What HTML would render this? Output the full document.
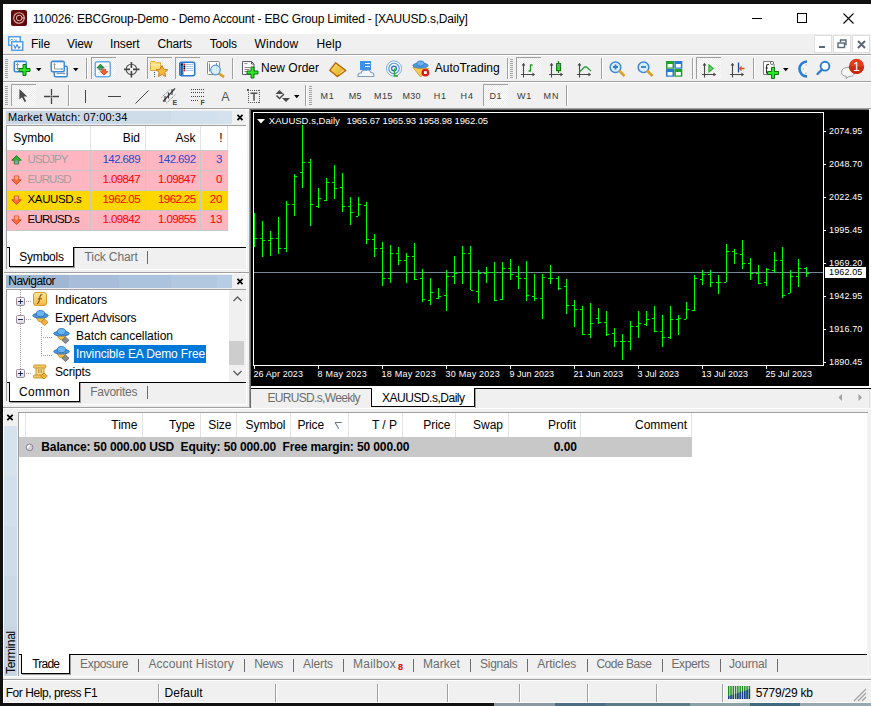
<!DOCTYPE html>
<html><head><meta charset="utf-8"><title>MT4</title>
<style>
html,body{margin:0;padding:0;}
body{width:871px;height:706px;position:relative;overflow:hidden;background:#111;font-family:"Liberation Sans",sans-serif;}
body>div{position:absolute;}
</style></head><body>
<div style="left:3px;top:4px;width:868px;height:699px;background:#f0f0f0;"></div>
<div style="left:3px;top:4px;width:868px;height:30px;background:#ffffff;"></div>
<svg style="position:absolute;left:11px;top:10px;" width="16" height="16" viewBox="0 0 16 16"><rect x="0" y="0" width="16" height="16" rx="2" fill="#620a0a"/><circle cx="8" cy="8" r="5.3" fill="none" stroke="#d8b0b0" stroke-width="1.1"/><circle cx="8.2" cy="8" r="2.8" fill="none" stroke="#e0b8b8" stroke-width="1"/><rect x="11" y="7.4" width="2.6" height="1.2" fill="#e0c0c0"/></svg>
<div style="left:32.70px;top:13.34px;font-size:12px;line-height:12px;color:#000;font-weight:400;font-family:'Liberation Sans',sans-serif;letter-spacing:-0.190px;white-space:pre;">110026: EBCGroup-Demo - Demo Account - EBC Group Limited - [XAUUSD.s,Daily]</div>
<div style="left:752px;top:18px;width:10px;height:1px;background:#000;"></div>
<div style="left:797px;top:13px;width:10px;height:10px;box-sizing:border-box;border:1px solid #000;background:transparent;"></div>
<svg style="position:absolute;left:843px;top:13px;" width="11" height="11" viewBox="0 0 11 11"><path d="M0.5 0.5 L10.5 10.5 M10.5 0.5 L0.5 10.5" stroke="#000" stroke-width="1.1"/></svg>
<div style="left:3px;top:34px;width:811px;height:20px;background:#f0f0f0;"></div>
<div style="left:3px;top:54px;width:868px;height:1px;background:#a0a0a0;"></div>
<div style="left:3px;top:55px;width:868px;height:1px;background:#ffffff;"></div>
<svg style="position:absolute;left:8px;top:36px;" width="16" height="15" viewBox="0 0 16 15"><rect x="0.75" y="0.75" width="11.5" height="8.5" fill="#fff" stroke="#4a9ae8" stroke-width="1.4"/><path d="M2.5 4.5 l1.3 -1.3 l1.3 1.3 M6.5 3.3 l1.2 1.2 l1 -0.5" stroke="#3a86d8" fill="none" stroke-width="1"/><rect x="3.75" y="5.75" width="11" height="8.5" fill="#fff" stroke="#4a9ae8" stroke-width="1.4"/><path d="M5.6 8.8 l1.6 3.5 l1.8 -3.5 l1.8 3.5 l1.5 -2" stroke="#3a86d8" fill="none" stroke-width="1.1"/></svg>
<div style="left:31.00px;top:37.84px;font-size:12px;line-height:12px;color:#000;font-weight:400;font-family:'Liberation Sans',sans-serif;letter-spacing:-0.086px;white-space:pre;">File</div>
<div style="left:67.00px;top:37.84px;font-size:12px;line-height:12px;color:#000;font-weight:400;font-family:'Liberation Sans',sans-serif;letter-spacing:-0.099px;white-space:pre;">View</div>
<div style="left:110.00px;top:37.84px;font-size:12px;line-height:12px;color:#000;font-weight:400;font-family:'Liberation Sans',sans-serif;letter-spacing:-0.103px;white-space:pre;">Insert</div>
<div style="left:157.60px;top:37.84px;font-size:12px;line-height:12px;color:#000;font-weight:400;font-family:'Liberation Sans',sans-serif;letter-spacing:-0.174px;white-space:pre;">Charts</div>
<div style="left:209.70px;top:37.84px;font-size:12px;line-height:12px;color:#000;font-weight:400;font-family:'Liberation Sans',sans-serif;letter-spacing:-0.203px;white-space:pre;">Tools</div>
<div style="left:254.50px;top:37.84px;font-size:12px;line-height:12px;color:#000;font-weight:400;font-family:'Liberation Sans',sans-serif;letter-spacing:0.219px;white-space:pre;">Window</div>
<div style="left:316.50px;top:37.84px;font-size:12px;line-height:12px;color:#000;font-weight:400;font-family:'Liberation Sans',sans-serif;letter-spacing:0.078px;white-space:pre;">Help</div>
<div style="left:814px;top:35px;width:18px;height:18px;box-sizing:border-box;border:1px solid #dedede;background:#ffffff;"></div>
<div style="left:833px;top:35px;width:18px;height:18px;box-sizing:border-box;border:1px solid #dedede;background:#ffffff;"></div>
<div style="left:852px;top:35px;width:18px;height:18px;box-sizing:border-box;border:1px solid #dedede;background:#ffffff;"></div>
<div style="left:819px;top:46px;width:6px;height:2px;background:#5a6878;"></div>
<svg style="position:absolute;left:837px;top:39px;" width="10" height="10" viewBox="0 0 10 10"><rect x="1" y="4" width="6.5" height="4.5" fill="none" stroke="#5a6878" stroke-width="1.4"/><path d="M3.5 3.5 V1 H9 V5.5 H8" fill="none" stroke="#5a6878" stroke-width="1.4"/></svg>
<svg style="position:absolute;left:857px;top:40px;" width="9" height="9" viewBox="0 0 9 9"><path d="M1 1 L8 8 M8 1 L1 8" stroke="#5a6878" stroke-width="2"/></svg>
<div style="left:3px;top:81px;width:868px;height:1px;background:#a0a0a0;"></div>
<div style="left:3px;top:82px;width:868px;height:1px;background:#ffffff;"></div>
<div style="left:5px;top:59px;width:3px;height:1px;background:#a4a4a4;"></div>
<div style="left:5px;top:61px;width:3px;height:1px;background:#a4a4a4;"></div>
<div style="left:5px;top:63px;width:3px;height:1px;background:#a4a4a4;"></div>
<div style="left:5px;top:65px;width:3px;height:1px;background:#a4a4a4;"></div>
<div style="left:5px;top:67px;width:3px;height:1px;background:#a4a4a4;"></div>
<div style="left:5px;top:69px;width:3px;height:1px;background:#a4a4a4;"></div>
<div style="left:5px;top:71px;width:3px;height:1px;background:#a4a4a4;"></div>
<div style="left:5px;top:73px;width:3px;height:1px;background:#a4a4a4;"></div>
<div style="left:5px;top:75px;width:3px;height:1px;background:#a4a4a4;"></div>
<div style="left:5px;top:77px;width:3px;height:1px;background:#a4a4a4;"></div>
<svg style="position:absolute;left:13px;top:60px;" width="20" height="18" viewBox="0 0 20 18"><rect x="1.25" y="1.25" width="12" height="10.5" rx="1.5" fill="#fff" stroke="#3a8ad8" stroke-width="1.5"/><path d="M2.5 2.6 h9.5" stroke="#b8d6f4"/><path d="M4.5 3.5 v6 M3 5 l1.5 -1.5 l1.5 1.5 M3 8 l1.5 1.5 l1.5 -1.5" stroke="#8898a8" fill="none" stroke-width="1"/><path d="M10.0 4.5 h3 v4 h4 v3 h-4 v4 h-3 v-4 h-4 v-3 h4 z" fill="#18e818" fill-opacity="0.92" stroke="#127212" stroke-width="1"/></svg>
<svg style="position:absolute;left:35.5px;top:68px;" width="6" height="4" viewBox="0 0 6 4"><path d="M0 0 h5.5 l-2.75 3.2 z" fill="#000"/></svg>
<svg style="position:absolute;left:50px;top:60px;" width="19" height="18" viewBox="0 0 19 18"><rect x="4.25" y="6.25" width="13" height="10.5" rx="1.5" fill="#fff" stroke="#3a8ad8" stroke-width="1.5"/><path d="M7 13.5 h8 M8 12.5 l-1 1 l1 1 M14 12.5 l1 1 l-1 1" stroke="#8898a8" fill="none"/><rect x="1.25" y="1.25" width="13" height="10.5" rx="1.5" fill="#fff" stroke="#3a8ad8" stroke-width="1.5"/><path d="M2.5 2.6 h10.5" stroke="#b8d6f4"/><path d="M4.5 3.5 v5.5 h8 M3.5 4.5 l1 -1 l1 1 M11.5 8 l1 1 l-1 1" stroke="#8898a8" fill="none"/></svg>
<svg style="position:absolute;left:73px;top:68px;" width="6" height="4" viewBox="0 0 6 4"><path d="M0 0 h5.5 l-2.75 3.2 z" fill="#000"/></svg>
<div style="left:86px;top:58px;width:1px;height:21px;background:#a0a0a0;"></div>
<div style="left:87px;top:58px;width:1px;height:21px;background:#ffffff;"></div>
<div style="left:91px;top:57px;width:25px;height:22px;background:#f8f8f8;background-image:repeating-conic-gradient(#ececec 0 25%,#fcfcfc 0 50%);background-size:2px 2px;"></div>
<div style="left:91px;top:57px;width:25px;height:1px;background:#a0a0a0;"></div>
<div style="left:91px;top:57px;width:1px;height:22px;background:#a0a0a0;"></div>
<svg style="position:absolute;left:94px;top:61px;" width="18" height="17" viewBox="0 0 18 17"><rect x="1.25" y="0.75" width="15" height="15" rx="2" fill="#fff" stroke="#6aaae8" stroke-width="1.5"/><path d="M4 5.5 h10 M4 8.5 h10 M4 11.5 h10" stroke="#e4e4e4"/><path d="M2.8 7 l3.7 -3.9 l3.7 3.9 h-2.2 v2 h-3 v-2 z" fill="#23a043" stroke="#137030" stroke-width="0.7"/><path d="M8.6 8.2 h3 v2.2 h2.3 l-3.8 3.8 l-3.8 -3.8 h2.3 z" fill="#ff5a2a" stroke="#d03a10" stroke-width="0.7"/><path d="M5.5 7 h2 v1.5 h-2 z" fill="#7aa0a8"/></svg>
<svg style="position:absolute;left:123px;top:61px;" width="17" height="17" viewBox="0 0 17 17"><circle cx="8.4" cy="8.4" r="5.2" fill="none" stroke="#555" stroke-width="1.1"/><path d="M8.4 1 v6 M8.4 10 v6.5 M1 8.4 h6 M10 8.4 h6.5" stroke="#444" stroke-width="1.6"/></svg>
<div style="left:147px;top:57px;width:25px;height:22px;background:#f8f8f8;background-image:repeating-conic-gradient(#ececec 0 25%,#fcfcfc 0 50%);background-size:2px 2px;"></div>
<div style="left:147px;top:57px;width:25px;height:1px;background:#a0a0a0;"></div>
<div style="left:147px;top:57px;width:1px;height:22px;background:#a0a0a0;"></div>
<svg style="position:absolute;left:149px;top:60px;" width="21" height="19" viewBox="0 0 21 19"><path d="M1.5 2.5 q0 -1 1 -1 h3.5 l1.2 1.2 h4.3 v7.8 h-10 z" fill="#fbe07a" stroke="#d8a030" stroke-width="0.9"/><path d="M1.5 5 h10" stroke="#f8f0c0"/><path d="M13 5.5 l1.8 3.7 l4 0.5 l-3 2.8 l0.8 4 l-3.6 -2 l-3.6 2 l0.8 -4 l-3 -2.8 l4 -0.5 z" fill="#f5b840" stroke="#c07818" stroke-width="0.9"/><path d="M5.5 12 v6" stroke="#555" stroke-dasharray="1 1"/></svg>
<div style="left:175px;top:57px;width:25px;height:22px;background:#f8f8f8;background-image:repeating-conic-gradient(#ececec 0 25%,#fcfcfc 0 50%);background-size:2px 2px;"></div>
<div style="left:175px;top:57px;width:25px;height:1px;background:#a0a0a0;"></div>
<div style="left:175px;top:57px;width:1px;height:22px;background:#a0a0a0;"></div>
<svg style="position:absolute;left:178px;top:61px;" width="18" height="16" viewBox="0 0 18 16"><rect x="1.75" y="1.25" width="15" height="13.5" rx="2" fill="#fff" stroke="#2a7ad0" stroke-width="1.5"/><rect x="2.2" y="1.8" width="3.3" height="12.5" fill="#3a86d8"/><path d="M3.8 3 v11" stroke="#445"/><path d="M8 3.5 h7.5 M8 5.5 h7.5 M8 7.5 h7.5 M8 9.5 h7.5" stroke="#a8c8ec"/><circle cx="3.8" cy="3.5" r="0.9" fill="#000"/><circle cx="6.5" cy="3.5" r="0.9" fill="#e02020"/><circle cx="6.5" cy="5.5" r="0.9" fill="#000"/><circle cx="6.5" cy="7.5" r="0.9" fill="#000"/><circle cx="6.5" cy="9.5" r="0.9" fill="#e02020"/></svg>
<svg style="position:absolute;left:206px;top:60px;" width="20" height="19" viewBox="0 0 20 19"><rect x="1.5" y="1.5" width="12" height="13" rx="1" fill="#fff" stroke="#8a8a8a"/><path d="M3.5 3.5 v8 M10.5 3 v7" stroke="#7a8aa8"/><circle cx="9.5" cy="10" r="4.8" fill="#d0ecfa" fill-opacity="0.85" stroke="#5a98d8" stroke-width="1.2"/><path d="M13 13.5 l5 3.6" stroke="#d8a020" stroke-width="2.6"/></svg>
<div style="left:232px;top:58px;width:1px;height:21px;background:#a0a0a0;"></div>
<div style="left:233px;top:58px;width:1px;height:21px;background:#ffffff;"></div>
<svg style="position:absolute;left:241px;top:60px;" width="18" height="19" viewBox="0 0 18 19"><path d="M1.5 1.5 h9 l2.5 2.5 v10.5 h-11.5 z" fill="#fff" stroke="#5a5a6a"/><path d="M10.5 1.5 v2.5 h2.5" fill="none" stroke="#5a5a6a"/><path d="M3.5 3.5 h3 M3.5 7.5 h6 M3.5 9.5 h5 M3.5 11.5 h4" stroke="#9a8a8a"/><path d="M10.0 7.0 h3 v4 h4 v3 h-4 v4 h-3 v-4 h-4 v-3 h4 z" fill="#18e818" fill-opacity="0.92" stroke="#127212" stroke-width="1"/></svg>
<div style="left:261.00px;top:61.84px;font-size:12px;line-height:12px;color:#000;font-weight:400;font-family:'Liberation Sans',sans-serif;letter-spacing:-0.002px;white-space:pre;">New Order</div>
<svg style="position:absolute;left:329px;top:62px;" width="18" height="16" viewBox="0 0 18 16"><defs><linearGradient id="eg" x1="0" y1="0" x2="1" y2="1"><stop offset="0" stop-color="#f8e070"/><stop offset="1" stop-color="#e0a818"/></linearGradient></defs><path d="M6.6 0.8 l10 7.5 l-8.3 6.2 l-7.6 -6.2 z" fill="url(#eg)" stroke="#b8600c" stroke-width="1.3"/><path d="M1.2 8.6 l7.5 6 l8 -6" fill="none" stroke="#c87010" stroke-width="1.2"/><path d="M10 12 l5 -3.5" stroke="#f8f0d0" stroke-width="0.8"/></svg>
<svg style="position:absolute;left:357px;top:60px;" width="18" height="18" viewBox="0 0 18 18"><rect x="3" y="1" width="11" height="9" fill="#3a90e8"/><path d="M8 3.5 h5 M8 6.5 h5" stroke="#fff" stroke-width="1.2"/><path d="M1 16.5 q-0.5 -3.5 3 -3.5 q1 -3.5 5 -2.5 q3.5 -1.5 5 2 q3 0 3 3 q0 1 -1 1 z" fill="#f4f8fc" stroke="#7a9ac0" stroke-width="1.1"/></svg>
<svg style="position:absolute;left:385px;top:60px;" width="18" height="18" viewBox="0 0 18 18"><circle cx="9" cy="8.5" r="7.6" fill="#f4f6f8" stroke="#7ab0e0" stroke-width="1"/><circle cx="9" cy="8.5" r="5.2" fill="none" stroke="#4a90d8" stroke-width="1.1"/><circle cx="9" cy="8.5" r="2.4" fill="none" stroke="#2a70c8" stroke-width="1.3"/><path d="M9.5 8.5 v7.5 h3.5" stroke="#28a828" stroke-width="1.4" fill="none"/></svg>
<svg style="position:absolute;left:412px;top:60px;" width="18" height="18" viewBox="0 0 18 18"><path d="M1 7.5 l7.5 9.5 l8 -8.5 z" fill="#f8c850" stroke="#c8a020" stroke-width="0.8"/><ellipse cx="8.5" cy="5.5" rx="7.6" ry="2.6" fill="#4a9ae0" stroke="#2a6ab8" stroke-width="0.7"/><ellipse cx="8.5" cy="3.5" rx="3.8" ry="2.6" fill="#6ab0f0" stroke="#2a6ab8" stroke-width="0.7"/><circle cx="13.4" cy="12.6" r="3.9" fill="#e01a10"/><rect x="12" y="11.2" width="2.8" height="2.8" fill="#fff"/></svg>
<div style="left:434.70px;top:61.84px;font-size:12px;line-height:12px;color:#000;font-weight:400;font-family:'Liberation Sans',sans-serif;letter-spacing:0.006px;white-space:pre;">AutoTrading</div>
<div style="left:507px;top:58px;width:1px;height:21px;background:#a0a0a0;"></div>
<div style="left:508px;top:58px;width:1px;height:21px;background:#ffffff;"></div>
<div style="left:510px;top:59px;width:3px;height:1px;background:#a4a4a4;"></div>
<div style="left:510px;top:61px;width:3px;height:1px;background:#a4a4a4;"></div>
<div style="left:510px;top:63px;width:3px;height:1px;background:#a4a4a4;"></div>
<div style="left:510px;top:65px;width:3px;height:1px;background:#a4a4a4;"></div>
<div style="left:510px;top:67px;width:3px;height:1px;background:#a4a4a4;"></div>
<div style="left:510px;top:69px;width:3px;height:1px;background:#a4a4a4;"></div>
<div style="left:510px;top:71px;width:3px;height:1px;background:#a4a4a4;"></div>
<div style="left:510px;top:73px;width:3px;height:1px;background:#a4a4a4;"></div>
<div style="left:510px;top:75px;width:3px;height:1px;background:#a4a4a4;"></div>
<div style="left:510px;top:77px;width:3px;height:1px;background:#a4a4a4;"></div>
<div style="left:516px;top:57px;width:25px;height:22px;background:#f8f8f8;background-image:repeating-conic-gradient(#ececec 0 25%,#fcfcfc 0 50%);background-size:2px 2px;"></div>
<div style="left:516px;top:57px;width:25px;height:1px;background:#a0a0a0;"></div>
<div style="left:516px;top:57px;width:1px;height:22px;background:#a0a0a0;"></div>
<svg style="position:absolute;left:520px;top:61px;" width="17" height="17" viewBox="0 0 17 17"><path d="M3.5 2.5 v14 M1 13.5 h13.5" stroke="#484848" stroke-width="1.1" fill="none"/><path d="M2 4.3 l1.5 -2 l1.5 2 z M12.7 12 l2 1.5 l-2 1.5 z" fill="#484848" stroke="#484848" stroke-width="0.5"/><path d="M10.5 3.5 v7 M8.5 10 h2 M10.5 4 h2" stroke="#1a9a1a" stroke-width="1.3"/></svg>
<svg style="position:absolute;left:548px;top:61px;" width="17" height="17" viewBox="0 0 17 17"><path d="M3.5 2.5 v14 M1 13.5 h13.5" stroke="#484848" stroke-width="1.1" fill="none"/><path d="M2 4.3 l1.5 -2 l1.5 2 z M12.7 12 l2 1.5 l-2 1.5 z" fill="#484848" stroke="#484848" stroke-width="0.5"/><path d="M10.5 0 v12" stroke="#127212" stroke-width="1.2"/><rect x="8.6" y="2.6" width="4" height="7" fill="#18e818" stroke="#127212" stroke-width="1.1"/><rect x="9" y="3" width="3.2" height="3" fill="#7a9aa0"/></svg>
<svg style="position:absolute;left:576px;top:61px;" width="17" height="17" viewBox="0 0 17 17"><path d="M3.5 2.5 v14 M1 13.5 h13.5" stroke="#484848" stroke-width="1.1" fill="none"/><path d="M2 4.3 l1.5 -2 l1.5 2 z M12.7 12 l2 1.5 l-2 1.5 z" fill="#484848" stroke="#484848" stroke-width="0.5"/><path d="M3.5 11 l5 -5 l2 0 l4.5 4" stroke="#2aa040" stroke-width="1.3" fill="none"/></svg>
<div style="left:601px;top:58px;width:1px;height:21px;background:#a0a0a0;"></div>
<div style="left:602px;top:58px;width:1px;height:21px;background:#ffffff;"></div>
<svg style="position:absolute;left:609px;top:61px;" width="17" height="17" viewBox="0 0 17 17"><circle cx="6.5" cy="6.3" r="5.3" fill="#d8f0fc" stroke="#3a88d8" stroke-width="1.5"/><path d="M4 6 h5 M6.5 3.5 v5" stroke="#3a78c8" stroke-width="1.8"/><path d="M10 9.5 l5.5 5.5" stroke="#d8a028" stroke-width="2.6"/></svg>
<svg style="position:absolute;left:637px;top:61px;" width="17" height="17" viewBox="0 0 17 17"><circle cx="6.5" cy="6.3" r="5.3" fill="#d8f0fc" stroke="#3a88d8" stroke-width="1.5"/><path d="M4 6 h5" stroke="#3a78c8" stroke-width="1.8"/><path d="M10 9.5 l5.5 5.5" stroke="#d8a028" stroke-width="2.6"/></svg>
<svg style="position:absolute;left:666px;top:61px;" width="17" height="16" viewBox="0 0 17 16"><rect x="0" y="0" width="8" height="7.7" fill="#23a02a"/><rect x="8.3" y="0" width="8" height="7.7" fill="#2a78d0"/><rect x="0" y="8" width="8" height="7.7" fill="#2a78d0"/><rect x="8.3" y="8" width="8" height="7.7" fill="#23a02a"/><rect x="1.5" y="3" width="5" height="3.5" fill="#fff"/><rect x="9.8" y="3" width="5" height="3.5" fill="#fff"/><rect x="1.5" y="11" width="5" height="3.5" fill="#fff"/><rect x="9.8" y="11" width="5" height="3.5" fill="#fff"/></svg>
<div style="left:692px;top:58px;width:1px;height:21px;background:#a0a0a0;"></div>
<div style="left:693px;top:58px;width:1px;height:21px;background:#ffffff;"></div>
<div style="left:696px;top:57px;width:25px;height:22px;background:#f8f8f8;background-image:repeating-conic-gradient(#ececec 0 25%,#fcfcfc 0 50%);background-size:2px 2px;"></div>
<div style="left:696px;top:57px;width:25px;height:1px;background:#a0a0a0;"></div>
<div style="left:696px;top:57px;width:1px;height:22px;background:#a0a0a0;"></div>
<svg style="position:absolute;left:701px;top:61px;" width="17" height="17" viewBox="0 0 17 17"><path d="M3.5 2.5 v14 M1 13.5 h13.5" stroke="#484848" stroke-width="1.1" fill="none"/><path d="M2 4.3 l1.5 -2 l1.5 2 z M12.7 12 l2 1.5 l-2 1.5 z" fill="#484848" stroke="#484848" stroke-width="0.5"/><path d="M8 4 l4 3.5 l-4 3.5 z" fill="#a0c0b0" stroke="#18b818" stroke-width="1.2"/></svg>
<svg style="position:absolute;left:729px;top:61px;" width="17" height="17" viewBox="0 0 17 17"><path d="M3.5 2.5 v14 M1 13.5 h13.5" stroke="#484848" stroke-width="1.1" fill="none"/><path d="M2 4.3 l1.5 -2 l1.5 2 z M12.7 12 l2 1.5 l-2 1.5 z" fill="#484848" stroke="#484848" stroke-width="0.5"/><path d="M9.5 1.5 v10" stroke="#1a4ab0" stroke-width="1.3"/><path d="M15.5 7.5 h-5 M12.5 5.5 l-2 2 l2 2" stroke="#e05a18" stroke-width="1.3" fill="none"/></svg>
<div style="left:753px;top:58px;width:1px;height:21px;background:#a0a0a0;"></div>
<div style="left:754px;top:58px;width:1px;height:21px;background:#ffffff;"></div>
<svg style="position:absolute;left:762px;top:60px;" width="19" height="20" viewBox="0 0 19 20"><path d="M1.5 1.5 h8 l2.5 2.5 v10.5 h-10.5 z" fill="#fff" stroke="#8a7a80"/><circle cx="10" cy="3" r="1.6" fill="#fff" stroke="#555" stroke-width="0.8"/><path d="M7 4.5 q-2.5 -0.5 -2.5 2 v7 M3.5 8 h2.5" stroke="#333" fill="none" stroke-width="1.1"/><path d="M9.5 7.5 h3 v4 h4 v3 h-4 v4 h-3 v-4 h-4 v-3 h4 z" fill="#18e818" fill-opacity="0.92" stroke="#127212" stroke-width="1"/></svg>
<svg style="position:absolute;left:783px;top:68px;" width="6" height="4" viewBox="0 0 6 4"><path d="M0 0 h5.5 l-2.75 3.2 z" fill="#000"/></svg>
<svg style="position:absolute;left:798px;top:60px;" width="9" height="18" viewBox="0 0 9 18"><circle cx="9" cy="9" r="6.8" fill="#f4f4f4"/><path d="M9 1.5 a7.5 7.5 0 0 0 0 15" fill="none" stroke="#2a7ad8" stroke-width="2.6"/><path d="M5 9 h1 M8 4.5 v1 M8 12.5 v1" stroke="#999"/></svg>
<svg style="position:absolute;left:815px;top:60px;" width="16" height="16" viewBox="0 0 16 16"><circle cx="10" cy="6.2" r="4.4" fill="#fff" stroke="#2a7ad0" stroke-width="1.9"/><path d="M7 9.5 l-4.5 4.5" stroke="#2a7ad0" stroke-width="2.4" stroke-linecap="round"/></svg>
<svg style="position:absolute;left:840px;top:57px;" width="28" height="22" viewBox="0 0 28 22"><path d="M1.5 15.5 q0 -5 6.5 -5 q6.5 0 6.5 5 q0 4 -5.5 4 l-3 2 l0.5 -2.2 q-5 -0.5 -5 -3.8 z" fill="#f6f6f6" stroke="#a0a0a0"/><circle cx="16.5" cy="9.3" r="7.6" fill="#e23c18"/><path d="M8.9 9.5 h15.2 a7.6 7.6 0 0 1 -15.2 0" fill="#c82a10"/><text x="16.5" y="13.8" font-family="Liberation Sans" font-size="12.5" fill="#fff" text-anchor="middle">1</text></svg>
<div style="left:3px;top:108px;width:868px;height:1px;background:#a0a0a0;"></div>
<div style="left:5px;top:86px;width:3px;height:1px;background:#a4a4a4;"></div>
<div style="left:5px;top:88px;width:3px;height:1px;background:#a4a4a4;"></div>
<div style="left:5px;top:90px;width:3px;height:1px;background:#a4a4a4;"></div>
<div style="left:5px;top:92px;width:3px;height:1px;background:#a4a4a4;"></div>
<div style="left:5px;top:94px;width:3px;height:1px;background:#a4a4a4;"></div>
<div style="left:5px;top:96px;width:3px;height:1px;background:#a4a4a4;"></div>
<div style="left:5px;top:98px;width:3px;height:1px;background:#a4a4a4;"></div>
<div style="left:5px;top:100px;width:3px;height:1px;background:#a4a4a4;"></div>
<div style="left:5px;top:102px;width:3px;height:1px;background:#a4a4a4;"></div>
<div style="left:5px;top:104px;width:3px;height:1px;background:#a4a4a4;"></div>
<div style="left:11px;top:84px;width:25px;height:22px;background:#f8f8f8;background-image:repeating-conic-gradient(#ececec 0 25%,#fcfcfc 0 50%);background-size:2px 2px;"></div>
<div style="left:11px;top:84px;width:25px;height:1px;background:#a0a0a0;"></div>
<div style="left:11px;top:84px;width:1px;height:22px;background:#a0a0a0;"></div>
<svg style="position:absolute;left:18px;top:88px;" width="10" height="16" viewBox="0 0 10 16"><path d="M1.4 1 v10.6 l2.6 -2.4 l2.6 4.8 l1.6 -0.8 l-2.5 -4.7 h3.6 z" fill="#4a4a4a"/></svg>
<svg style="position:absolute;left:43px;top:88px;" width="17" height="17" viewBox="0 0 17 17"><path d="M1 8.5 h6.6 M9.4 8.5 h6.6 M8.5 1 v6.6 M8.5 9.4 v6.6" stroke="#444" stroke-width="1.3"/><rect x="8" y="8" width="1" height="1" fill="#444"/></svg>
<div style="left:68px;top:85px;width:1px;height:21px;background:#a0a0a0;"></div>
<div style="left:69px;top:85px;width:1px;height:21px;background:#ffffff;"></div>
<div style="left:85px;top:90px;width:1px;height:13px;background:#444;"></div>
<div style="left:108px;top:96px;width:13px;height:1px;background:#444;"></div>
<svg style="position:absolute;left:135px;top:90px;" width="14" height="14" viewBox="0 0 14 14"><path d="M0.5 13.5 L13.5 0.5" stroke="#444"/></svg>
<svg style="position:absolute;left:160px;top:87px;" width="18" height="18" viewBox="0 0 18 18"><path d="M1.5 10.5 L10 2.5" stroke="#5a6a80" stroke-dasharray="1 1"/><path d="M6.5 16 L15.5 7.5" stroke="#5a6a80" stroke-dasharray="1 1"/><path d="M3 14.5 L15 1.5" stroke="#3a3a3a" stroke-width="1.2"/><path d="M5 9 v6 M8.5 5.5 v6 M12 2 v6" stroke="#3a3a3a" stroke-width="1.1"/><text x="12.5" y="17.7" font-family="Liberation Sans" font-size="7" font-weight="700" fill="#444">E</text></svg>
<svg style="position:absolute;left:190px;top:87px;" width="16" height="19" viewBox="0 0 16 19"><path d="M1 2.5 h13 M1 5.5 h13 M1 9.5 h13 M1 13.5 h8" stroke="#444" stroke-dasharray="1 1"/><text x="10.5" y="17.7" font-family="Liberation Sans" font-size="7" font-weight="700" fill="#444">F</text></svg>
<div style="left:221.30px;top:90.62px;font-size:12.5px;line-height:12.5px;color:#555555;font-weight:400;font-family:'Liberation Sans',sans-serif;letter-spacing:0.456px;white-space:pre;">A</div>
<svg style="position:absolute;left:247px;top:89px;" width="14" height="15" viewBox="0 0 14 15"><rect x="1" y="1" width="1" height="1" fill="#555"/><rect x="1" y="13" width="1" height="1" fill="#555"/><rect x="3" y="1" width="1" height="1" fill="#555"/><rect x="3" y="13" width="1" height="1" fill="#555"/><rect x="5" y="1" width="1" height="1" fill="#555"/><rect x="5" y="13" width="1" height="1" fill="#555"/><rect x="7" y="1" width="1" height="1" fill="#555"/><rect x="7" y="13" width="1" height="1" fill="#555"/><rect x="9" y="1" width="1" height="1" fill="#555"/><rect x="9" y="13" width="1" height="1" fill="#555"/><rect x="11" y="1" width="1" height="1" fill="#555"/><rect x="11" y="13" width="1" height="1" fill="#555"/><rect x="1" y="1" width="1" height="1" fill="#555"/><rect x="12" y="1" width="1" height="1" fill="#555"/><rect x="1" y="3" width="1" height="1" fill="#555"/><rect x="12" y="3" width="1" height="1" fill="#555"/><rect x="1" y="5" width="1" height="1" fill="#555"/><rect x="12" y="5" width="1" height="1" fill="#555"/><rect x="1" y="7" width="1" height="1" fill="#555"/><rect x="12" y="7" width="1" height="1" fill="#555"/><rect x="1" y="9" width="1" height="1" fill="#555"/><rect x="12" y="9" width="1" height="1" fill="#555"/><rect x="1" y="11" width="1" height="1" fill="#555"/><rect x="12" y="11" width="1" height="1" fill="#555"/><rect x="1" y="13" width="1" height="1" fill="#555"/><rect x="12" y="13" width="1" height="1" fill="#555"/><rect x="0" y="0" width="2" height="2" fill="#555"/><path d="M3.5 4.2 h7 M7 4.2 v7.5" stroke="#505050" stroke-width="1.5"/></svg>
<svg style="position:absolute;left:275px;top:89px;" width="16" height="15" viewBox="0 0 16 15"><path d="M0.5 5 l4 -4 l4 4 z" fill="#4a4a4a"/><path d="M7 9 l4 4 l4 -4 z" fill="#4a4a4a"/><path d="M1.5 6.5 l3 3 l4.5 -4.5" stroke="#4a4a4a" fill="none" stroke-width="1.5"/></svg>
<svg style="position:absolute;left:294px;top:95px;" width="6" height="4" viewBox="0 0 6 4"><path d="M0 0 h5.5 l-2.75 3.2 z" fill="#000"/></svg>
<div style="left:305px;top:85px;width:1px;height:21px;background:#a0a0a0;"></div>
<div style="left:306px;top:85px;width:1px;height:21px;background:#ffffff;"></div>
<div style="left:309px;top:86px;width:3px;height:1px;background:#a4a4a4;"></div>
<div style="left:309px;top:88px;width:3px;height:1px;background:#a4a4a4;"></div>
<div style="left:309px;top:90px;width:3px;height:1px;background:#a4a4a4;"></div>
<div style="left:309px;top:92px;width:3px;height:1px;background:#a4a4a4;"></div>
<div style="left:309px;top:94px;width:3px;height:1px;background:#a4a4a4;"></div>
<div style="left:309px;top:96px;width:3px;height:1px;background:#a4a4a4;"></div>
<div style="left:309px;top:98px;width:3px;height:1px;background:#a4a4a4;"></div>
<div style="left:309px;top:100px;width:3px;height:1px;background:#a4a4a4;"></div>
<div style="left:309px;top:102px;width:3px;height:1px;background:#a4a4a4;"></div>
<div style="left:309px;top:104px;width:3px;height:1px;background:#a4a4a4;"></div>
<div style="left:320.60px;top:92.38px;font-size:9px;line-height:9px;color:#3a3a3a;font-weight:400;font-family:'Liberation Sans',sans-serif;letter-spacing:0.542px;white-space:pre;">M1</div>
<div style="left:348.70px;top:92.38px;font-size:9px;line-height:9px;color:#3a3a3a;font-weight:400;font-family:'Liberation Sans',sans-serif;letter-spacing:0.292px;white-space:pre;">M5</div>
<div style="left:374.00px;top:92.38px;font-size:9px;line-height:9px;color:#3a3a3a;font-weight:400;font-family:'Liberation Sans',sans-serif;letter-spacing:0.428px;white-space:pre;">M15</div>
<div style="left:402.60px;top:92.38px;font-size:9px;line-height:9px;color:#3a3a3a;font-weight:400;font-family:'Liberation Sans',sans-serif;letter-spacing:0.228px;white-space:pre;">M30</div>
<div style="left:433.80px;top:92.38px;font-size:9px;line-height:9px;color:#3a3a3a;font-weight:400;font-family:'Liberation Sans',sans-serif;letter-spacing:0.592px;white-space:pre;">H1</div>
<div style="left:460.40px;top:92.38px;font-size:9px;line-height:9px;color:#3a3a3a;font-weight:400;font-family:'Liberation Sans',sans-serif;letter-spacing:1.092px;white-space:pre;">H4</div>
<div style="left:483px;top:84px;width:25px;height:22px;background:#f8f8f8;background-image:repeating-conic-gradient(#ececec 0 25%,#fcfcfc 0 50%);background-size:2px 2px;"></div>
<div style="left:483px;top:84px;width:25px;height:1px;background:#a0a0a0;"></div>
<div style="left:483px;top:84px;width:1px;height:22px;background:#a0a0a0;"></div>
<div style="left:489.50px;top:92.38px;font-size:9px;line-height:9px;color:#3a3a3a;font-weight:400;font-family:'Liberation Sans',sans-serif;letter-spacing:0.392px;white-space:pre;">D1</div>
<div style="left:517.00px;top:92.38px;font-size:9px;line-height:9px;color:#3a3a3a;font-weight:400;font-family:'Liberation Sans',sans-serif;letter-spacing:0.650px;white-space:pre;">W1</div>
<div style="left:543.50px;top:92.38px;font-size:9px;line-height:9px;color:#3a3a3a;font-weight:400;font-family:'Liberation Sans',sans-serif;letter-spacing:1.050px;white-space:pre;">MN</div>
<div style="left:566px;top:85px;width:1px;height:21px;background:#a0a0a0;"></div>
<div style="left:567px;top:85px;width:1px;height:21px;background:#ffffff;"></div>
<div style="left:3px;top:109px;width:246px;height:1px;background:#ffffff;"></div>
<div style="left:3px;top:109px;width:1px;height:298px;background:#ffffff;"></div>
<div style="left:249px;top:109px;width:1px;height:299px;background:#a0a0a0;"></div>
<div style="left:250px;top:109px;width:1px;height:299px;background:#696969;"></div>
<div style="left:3px;top:407px;width:247px;height:1px;background:#a0a0a0;"></div>
<div style="left:246px;top:110px;width:1px;height:295px;background:#ffffff;"></div>
<div style="left:3px;top:404px;width:244px;height:1px;background:#ffffff;"></div>
<div style="left:6px;top:111px;width:226px;height:13px;background:linear-gradient(90deg,#c8d5e3 0 63px,#cbd8e6 63px 113px,#cedbe9 113px 165px,#d2dfec 165px 211px,#d5e2ee 211px);"></div>
<div style="left:8.00px;top:111.69px;font-size:11px;line-height:11px;color:#000;font-weight:400;font-family:'Liberation Sans',sans-serif;letter-spacing:0.142px;white-space:pre;">Market Watch: 07:00:34</div>
<svg style="position:absolute;left:236px;top:114px;" width="8" height="7" viewBox="0 0 8 7"><path d="M1.5 0.8 L6.5 6.2 M6.5 0.8 L1.5 6.2" stroke="#000" stroke-width="1.7"/></svg>
<div style="left:6px;top:125px;width:240px;height:1px;background:#a0a0a0;"></div>
<div style="left:6px;top:125px;width:1px;height:144px;background:#a0a0a0;"></div>
<div style="left:7px;top:126px;width:239px;height:121px;background:#ffffff;"></div>
<div style="left:90px;top:126px;width:1px;height:24px;background:#e3e3e3;"></div>
<div style="left:145px;top:126px;width:1px;height:24px;background:#e3e3e3;"></div>
<div style="left:200px;top:126px;width:1px;height:24px;background:#e3e3e3;"></div>
<div style="left:227px;top:126px;width:1px;height:24px;background:#e3e3e3;"></div>
<div style="left:13.20px;top:131.84px;font-size:12px;line-height:12px;color:#000;font-weight:400;font-family:'Liberation Sans',sans-serif;letter-spacing:-0.003px;white-space:pre;">Symbol</div>
<div style="left:122.66px;top:131.84px;font-size:12px;line-height:12px;color:#000;font-weight:400;font-family:'Liberation Sans',sans-serif;letter-spacing:0.000px;white-space:pre;">Bid</div>
<div style="left:175.48px;top:131.84px;font-size:12px;line-height:12px;color:#000;font-weight:400;font-family:'Liberation Sans',sans-serif;letter-spacing:0.000px;white-space:pre;">Ask</div>
<div style="left:219.16px;top:131.84px;font-size:12px;line-height:12px;color:#000;font-weight:400;font-family:'Liberation Sans',sans-serif;letter-spacing:0.000px;white-space:pre;">!</div>
<div style="left:7px;top:150px;width:221px;height:20px;background:#ffb6c1;"></div>
<div style="left:7px;top:150px;width:221px;height:1px;background:#c8c8c8;"></div>
<div style="left:90px;top:150px;width:1px;height:20px;background:#c8c8c8;"></div>
<div style="left:145px;top:150px;width:1px;height:20px;background:#c8c8c8;"></div>
<div style="left:200px;top:150px;width:1px;height:20px;background:#c8c8c8;"></div>
<div style="left:227px;top:150px;width:1px;height:20px;background:#c8c8c8;"></div>
<svg style="position:absolute;left:11px;top:155px;" width="11" height="10" viewBox="0 0 11 10"><path d="M5.5 0.6 l4.8 4.6 h-2.6 v3.8 h-4.4 v-3.8 h-2.6 z" fill="#30b030" stroke="#1a6a1a" stroke-width="0.8"/><path d="M3.8 5.4 h3.4 v3.4 h-3.4z" fill="#8aa0b0"/></svg>
<div style="left:27.60px;top:154.27px;font-size:11.5px;line-height:11.5px;color:#a0a0a0;font-weight:400;font-family:'Liberation Sans',sans-serif;letter-spacing:-0.896px;white-space:pre;">USDJPY</div>
<div style="left:102.50px;top:154.27px;font-size:11.5px;line-height:11.5px;color:#2a48c8;font-weight:400;font-family:'Liberation Sans',sans-serif;letter-spacing:-0.583px;white-space:pre;">142.689</div>
<div style="left:158.00px;top:154.27px;font-size:11.5px;line-height:11.5px;color:#2a48c8;font-weight:400;font-family:'Liberation Sans',sans-serif;letter-spacing:-0.583px;white-space:pre;">142.692</div>
<div style="left:216.09px;top:154.27px;font-size:11.5px;line-height:11.5px;color:#2a48c8;font-weight:400;font-family:'Liberation Sans',sans-serif;letter-spacing:0.000px;white-space:pre;">3</div>
<div style="left:7px;top:170px;width:221px;height:20px;background:#ffb6c1;"></div>
<div style="left:7px;top:170px;width:221px;height:1px;background:#c8c8c8;"></div>
<div style="left:90px;top:170px;width:1px;height:20px;background:#c8c8c8;"></div>
<div style="left:145px;top:170px;width:1px;height:20px;background:#c8c8c8;"></div>
<div style="left:200px;top:170px;width:1px;height:20px;background:#c8c8c8;"></div>
<div style="left:227px;top:170px;width:1px;height:20px;background:#c8c8c8;"></div>
<svg style="position:absolute;left:11px;top:175px;" width="11" height="10" viewBox="0 0 11 10"><path d="M5.5 9.4 l4.8 -4.6 h-2.6 v-3.8 h-4.4 v3.8 h-2.6 z" fill="#ff6a3a" stroke="#c8401a" stroke-width="0.8"/><path d="M3.8 1.2 h3.4 v3.4 h-3.4z" fill="#f8a888"/></svg>
<div style="left:27.60px;top:174.27px;font-size:11.5px;line-height:11.5px;color:#a0a0a0;font-weight:400;font-family:'Liberation Sans',sans-serif;letter-spacing:-0.927px;white-space:pre;">EURUSD</div>
<div style="left:102.50px;top:174.27px;font-size:11.5px;line-height:11.5px;color:#ff0000;font-weight:400;font-family:'Liberation Sans',sans-serif;letter-spacing:-0.583px;white-space:pre;">1.09847</div>
<div style="left:158.00px;top:174.27px;font-size:11.5px;line-height:11.5px;color:#ff0000;font-weight:400;font-family:'Liberation Sans',sans-serif;letter-spacing:-0.583px;white-space:pre;">1.09847</div>
<div style="left:216.09px;top:174.27px;font-size:11.5px;line-height:11.5px;color:#ff0000;font-weight:400;font-family:'Liberation Sans',sans-serif;letter-spacing:0.000px;white-space:pre;">0</div>
<div style="left:7px;top:190px;width:221px;height:20px;background:#ffd700;"></div>
<div style="left:7px;top:190px;width:221px;height:1px;background:#c8c8c8;"></div>
<div style="left:90px;top:190px;width:1px;height:20px;background:#c8c8c8;"></div>
<div style="left:145px;top:190px;width:1px;height:20px;background:#c8c8c8;"></div>
<div style="left:200px;top:190px;width:1px;height:20px;background:#c8c8c8;"></div>
<div style="left:227px;top:190px;width:1px;height:20px;background:#c8c8c8;"></div>
<svg style="position:absolute;left:11px;top:195px;" width="11" height="10" viewBox="0 0 11 10"><path d="M5.5 9.4 l4.8 -4.6 h-2.6 v-3.8 h-4.4 v3.8 h-2.6 z" fill="#ff6a3a" stroke="#c8401a" stroke-width="0.8"/><path d="M3.8 1.2 h3.4 v3.4 h-3.4z" fill="#f8a888"/></svg>
<div style="left:27.60px;top:194.27px;font-size:11.5px;line-height:11.5px;color:#000;font-weight:400;font-family:'Liberation Sans',sans-serif;letter-spacing:-0.397px;white-space:pre;">XAUUSD.s</div>
<div style="left:102.50px;top:194.27px;font-size:11.5px;line-height:11.5px;color:#ff0000;font-weight:400;font-family:'Liberation Sans',sans-serif;letter-spacing:-0.583px;white-space:pre;">1962.05</div>
<div style="left:158.00px;top:194.27px;font-size:11.5px;line-height:11.5px;color:#ff0000;font-weight:400;font-family:'Liberation Sans',sans-serif;letter-spacing:-0.583px;white-space:pre;">1962.25</div>
<div style="left:209.70px;top:194.27px;font-size:11.5px;line-height:11.5px;color:#ff0000;font-weight:400;font-family:'Liberation Sans',sans-serif;letter-spacing:0.000px;white-space:pre;">20</div>
<div style="left:7px;top:210px;width:221px;height:20px;background:#ffb6c1;"></div>
<div style="left:7px;top:210px;width:221px;height:1px;background:#c8c8c8;"></div>
<div style="left:90px;top:210px;width:1px;height:20px;background:#c8c8c8;"></div>
<div style="left:145px;top:210px;width:1px;height:20px;background:#c8c8c8;"></div>
<div style="left:200px;top:210px;width:1px;height:20px;background:#c8c8c8;"></div>
<div style="left:227px;top:210px;width:1px;height:20px;background:#c8c8c8;"></div>
<svg style="position:absolute;left:11px;top:215px;" width="11" height="10" viewBox="0 0 11 10"><path d="M5.5 9.4 l4.8 -4.6 h-2.6 v-3.8 h-4.4 v3.8 h-2.6 z" fill="#ff6a3a" stroke="#c8401a" stroke-width="0.8"/><path d="M3.8 1.2 h3.4 v3.4 h-3.4z" fill="#f8a888"/></svg>
<div style="left:27.60px;top:214.27px;font-size:11.5px;line-height:11.5px;color:#000;font-weight:400;font-family:'Liberation Sans',sans-serif;letter-spacing:-0.777px;white-space:pre;">EURUSD.s</div>
<div style="left:102.50px;top:214.27px;font-size:11.5px;line-height:11.5px;color:#ff0000;font-weight:400;font-family:'Liberation Sans',sans-serif;letter-spacing:-0.583px;white-space:pre;">1.09842</div>
<div style="left:158.00px;top:214.27px;font-size:11.5px;line-height:11.5px;color:#ff0000;font-weight:400;font-family:'Liberation Sans',sans-serif;letter-spacing:-0.583px;white-space:pre;">1.09855</div>
<div style="left:209.70px;top:214.27px;font-size:11.5px;line-height:11.5px;color:#ff0000;font-weight:400;font-family:'Liberation Sans',sans-serif;letter-spacing:0.000px;white-space:pre;">13</div>
<div style="left:7px;top:230px;width:221px;height:1px;background:#c8c8c8;"></div>
<div style="left:7px;top:248px;width:239px;height:20px;background:#f0f0f0;"></div>
<div style="left:7px;top:247px;width:239px;height:1px;background:#000;"></div>
<div style="left:9px;top:247px;width:65px;height:20px;background:#ffffff;box-sizing:border-box;border:1px solid #000;border-top:none;"></div>
<div style="left:74px;top:248px;width:1px;height:20px;background:#a0a0a0;"></div>
<div style="left:10px;top:267px;width:65px;height:1px;background:#a0a0a0;"></div>
<div style="left:19.30px;top:250.84px;font-size:12px;line-height:12px;color:#000;font-weight:400;font-family:'Liberation Sans',sans-serif;letter-spacing:-0.217px;white-space:pre;">Symbols</div>
<div style="left:84.60px;top:250.84px;font-size:12px;line-height:12px;color:#6d6d6d;font-weight:400;font-family:'Liberation Sans',sans-serif;letter-spacing:-0.123px;white-space:pre;">Tick Chart</div>
<div style="left:147px;top:251px;width:1px;height:13px;background:#6d6d6d;"></div>
<div style="left:4px;top:269px;width:242px;height:1px;background:#ffffff;"></div>
<div style="left:4px;top:272px;width:245px;height:1px;background:#a0a0a0;"></div>
<div style="left:4px;top:273px;width:242px;height:1px;background:#ffffff;"></div>
<div style="left:6px;top:275px;width:226px;height:13px;background:linear-gradient(90deg,#a0b7d4 0 63px,#a7bdd9 63px 113px,#acc3dd 113px 165px,#b2c8e1 165px 211px,#b7cde5 211px);"></div>
<div style="left:8.30px;top:274.84px;font-size:12px;line-height:12px;color:#000;font-weight:400;font-family:'Liberation Sans',sans-serif;letter-spacing:-0.507px;white-space:pre;">Navigator</div>
<svg style="position:absolute;left:236px;top:278px;" width="8" height="7" viewBox="0 0 8 7"><path d="M1.5 0.8 L6.5 6.2 M6.5 0.8 L1.5 6.2" stroke="#000" stroke-width="1.7"/></svg>
<div style="left:6px;top:289px;width:240px;height:1px;background:#a0a0a0;"></div>
<div style="left:6px;top:289px;width:1px;height:112px;background:#a0a0a0;"></div>
<div style="left:7px;top:290px;width:222px;height:92px;background:#ffffff;"></div>
<div style="left:229px;top:290px;width:17px;height:92px;background:#f0f0f0;"></div>
<svg style="position:absolute;left:233px;top:296px;" width="9" height="6" viewBox="0 0 9 6"><path d="M0.5 5 L4.5 1 L8.5 5" stroke="#606060" stroke-width="1.4" fill="none"/></svg>
<svg style="position:absolute;left:233px;top:370px;" width="9" height="6" viewBox="0 0 9 6"><path d="M0.5 1 L4.5 5 L8.5 1" stroke="#606060" stroke-width="1.4" fill="none"/></svg>
<div style="left:229px;top:341px;width:15px;height:24px;background:#cdcdcd;"></div>
<div style="left:20px;top:290px;width:1px;height:1px;background:#a0a0a0;"></div>
<div style="left:20px;top:292px;width:1px;height:1px;background:#a0a0a0;"></div>
<div style="left:20px;top:294px;width:1px;height:1px;background:#a0a0a0;"></div>
<div style="left:20px;top:296px;width:1px;height:1px;background:#a0a0a0;"></div>
<div style="left:20px;top:298px;width:1px;height:1px;background:#a0a0a0;"></div>
<div style="left:20px;top:300px;width:1px;height:1px;background:#a0a0a0;"></div>
<div style="left:20px;top:302px;width:1px;height:1px;background:#a0a0a0;"></div>
<div style="left:20px;top:304px;width:1px;height:1px;background:#a0a0a0;"></div>
<div style="left:20px;top:306px;width:1px;height:1px;background:#a0a0a0;"></div>
<div style="left:20px;top:308px;width:1px;height:1px;background:#a0a0a0;"></div>
<div style="left:20px;top:310px;width:1px;height:1px;background:#a0a0a0;"></div>
<div style="left:20px;top:312px;width:1px;height:1px;background:#a0a0a0;"></div>
<div style="left:20px;top:314px;width:1px;height:1px;background:#a0a0a0;"></div>
<div style="left:20px;top:316px;width:1px;height:1px;background:#a0a0a0;"></div>
<div style="left:20px;top:318px;width:1px;height:1px;background:#a0a0a0;"></div>
<div style="left:20px;top:320px;width:1px;height:1px;background:#a0a0a0;"></div>
<div style="left:20px;top:322px;width:1px;height:1px;background:#a0a0a0;"></div>
<div style="left:20px;top:324px;width:1px;height:1px;background:#a0a0a0;"></div>
<div style="left:20px;top:326px;width:1px;height:1px;background:#a0a0a0;"></div>
<div style="left:20px;top:328px;width:1px;height:1px;background:#a0a0a0;"></div>
<div style="left:20px;top:330px;width:1px;height:1px;background:#a0a0a0;"></div>
<div style="left:20px;top:332px;width:1px;height:1px;background:#a0a0a0;"></div>
<div style="left:20px;top:334px;width:1px;height:1px;background:#a0a0a0;"></div>
<div style="left:20px;top:336px;width:1px;height:1px;background:#a0a0a0;"></div>
<div style="left:20px;top:338px;width:1px;height:1px;background:#a0a0a0;"></div>
<div style="left:20px;top:340px;width:1px;height:1px;background:#a0a0a0;"></div>
<div style="left:20px;top:342px;width:1px;height:1px;background:#a0a0a0;"></div>
<div style="left:20px;top:344px;width:1px;height:1px;background:#a0a0a0;"></div>
<div style="left:20px;top:346px;width:1px;height:1px;background:#a0a0a0;"></div>
<div style="left:20px;top:348px;width:1px;height:1px;background:#a0a0a0;"></div>
<div style="left:20px;top:350px;width:1px;height:1px;background:#a0a0a0;"></div>
<div style="left:20px;top:352px;width:1px;height:1px;background:#a0a0a0;"></div>
<div style="left:20px;top:354px;width:1px;height:1px;background:#a0a0a0;"></div>
<div style="left:20px;top:356px;width:1px;height:1px;background:#a0a0a0;"></div>
<div style="left:20px;top:358px;width:1px;height:1px;background:#a0a0a0;"></div>
<div style="left:20px;top:360px;width:1px;height:1px;background:#a0a0a0;"></div>
<div style="left:20px;top:362px;width:1px;height:1px;background:#a0a0a0;"></div>
<div style="left:20px;top:364px;width:1px;height:1px;background:#a0a0a0;"></div>
<div style="left:20px;top:366px;width:1px;height:1px;background:#a0a0a0;"></div>
<div style="left:20px;top:368px;width:1px;height:1px;background:#a0a0a0;"></div>
<div style="left:20px;top:370px;width:1px;height:1px;background:#a0a0a0;"></div>
<svg style="position:absolute;left:16px;top:297px;" width="9" height="9" viewBox="0 0 9 9"><defs><linearGradient id="pb" x1="0" y1="0" x2="0" y2="1"><stop offset="0" stop-color="#ffffff"/><stop offset="1" stop-color="#d8d8e0"/></linearGradient></defs><rect x="0.5" y="0.5" width="8" height="8" rx="1.2" fill="url(#pb)" stroke="#9a8a9a"/><path d="M2 4.5 h5 M4.5 2 v5" stroke="#1a2a5a"/></svg>
<div style="left:26px;top:301px;width:1px;height:1px;background:#a0a0a0;"></div>
<div style="left:28px;top:301px;width:1px;height:1px;background:#a0a0a0;"></div>
<div style="left:30px;top:301px;width:1px;height:1px;background:#a0a0a0;"></div>
<svg style="position:absolute;left:32px;top:292px;" width="16" height="15" viewBox="0 0 16 15"><defs><linearGradient id="ig" x1="0" y1="0" x2="0" y2="1"><stop offset="0" stop-color="#fde8a0"/><stop offset="1" stop-color="#f4b840"/></linearGradient></defs><rect x="1.5" y="0.5" width="13" height="13" rx="2.5" fill="url(#ig)" stroke="#d89a30"/><path d="M5 11.5 q1.8 0.2 2.4 -3.5 l0.6 -3.5 q0.5 -2 2.4 -1.8" stroke="#8a5a10" fill="none" stroke-width="1.2"/><path d="M5.8 6.8 h4.2" stroke="#8a5a10" stroke-width="1.1"/></svg>
<div style="left:55.00px;top:294.34px;font-size:12px;line-height:12px;color:#000;font-weight:400;font-family:'Liberation Sans',sans-serif;letter-spacing:-0.003px;white-space:pre;">Indicators</div>
<svg style="position:absolute;left:16px;top:315px;" width="9" height="9" viewBox="0 0 9 9"><defs><linearGradient id="pb" x1="0" y1="0" x2="0" y2="1"><stop offset="0" stop-color="#ffffff"/><stop offset="1" stop-color="#d8d8e0"/></linearGradient></defs><rect x="0.5" y="0.5" width="8" height="8" rx="1.2" fill="url(#pb)" stroke="#9a8a9a"/><path d="M2 4.5 h5" stroke="#1a2a5a"/></svg>
<div style="left:26px;top:319px;width:1px;height:1px;background:#a0a0a0;"></div>
<div style="left:28px;top:319px;width:1px;height:1px;background:#a0a0a0;"></div>
<div style="left:30px;top:319px;width:1px;height:1px;background:#a0a0a0;"></div>
<svg style="position:absolute;left:32px;top:310px;" width="17" height="16" viewBox="0 0 17 16"><path d="M3.5 6.5 q5 11 10 0 z" fill="#f6c040" stroke="#b88a20" stroke-width="0.8"/><ellipse cx="8.5" cy="5.6" rx="7.8" ry="2.5" fill="#4a98e0" stroke="#2a6ab0" stroke-width="0.8"/><ellipse cx="8.5" cy="3.6" rx="4.2" ry="3.1" fill="#6ab4f4" stroke="#2a6ab0" stroke-width="0.8"/><path d="M12.5 9 l3.5 3.3 l-3.5 3.3 l-3.5 -3.3 z" fill="#f2b040" stroke="#b87a10" stroke-width="0.8"/></svg>
<div style="left:55.00px;top:312.34px;font-size:12px;line-height:12px;color:#000;font-weight:400;font-family:'Liberation Sans',sans-serif;letter-spacing:-0.125px;white-space:pre;">Expert Advisors</div>
<div style="left:41px;top:327px;width:1px;height:1px;background:#a0a0a0;"></div>
<div style="left:41px;top:329px;width:1px;height:1px;background:#a0a0a0;"></div>
<div style="left:41px;top:331px;width:1px;height:1px;background:#a0a0a0;"></div>
<div style="left:41px;top:333px;width:1px;height:1px;background:#a0a0a0;"></div>
<div style="left:41px;top:335px;width:1px;height:1px;background:#a0a0a0;"></div>
<div style="left:41px;top:337px;width:1px;height:1px;background:#a0a0a0;"></div>
<div style="left:41px;top:339px;width:1px;height:1px;background:#a0a0a0;"></div>
<div style="left:41px;top:341px;width:1px;height:1px;background:#a0a0a0;"></div>
<div style="left:41px;top:343px;width:1px;height:1px;background:#a0a0a0;"></div>
<div style="left:41px;top:345px;width:1px;height:1px;background:#a0a0a0;"></div>
<div style="left:41px;top:347px;width:1px;height:1px;background:#a0a0a0;"></div>
<div style="left:41px;top:349px;width:1px;height:1px;background:#a0a0a0;"></div>
<div style="left:41px;top:351px;width:1px;height:1px;background:#a0a0a0;"></div>
<div style="left:41px;top:353px;width:1px;height:1px;background:#a0a0a0;"></div>
<div style="left:41px;top:355px;width:1px;height:1px;background:#a0a0a0;"></div>
<div style="left:41px;top:337px;width:1px;height:1px;background:#a0a0a0;"></div>
<div style="left:43px;top:337px;width:1px;height:1px;background:#a0a0a0;"></div>
<div style="left:45px;top:337px;width:1px;height:1px;background:#a0a0a0;"></div>
<div style="left:47px;top:337px;width:1px;height:1px;background:#a0a0a0;"></div>
<div style="left:49px;top:337px;width:1px;height:1px;background:#a0a0a0;"></div>
<div style="left:51px;top:337px;width:1px;height:1px;background:#a0a0a0;"></div>
<div style="left:41px;top:355px;width:1px;height:1px;background:#a0a0a0;"></div>
<div style="left:43px;top:355px;width:1px;height:1px;background:#a0a0a0;"></div>
<div style="left:45px;top:355px;width:1px;height:1px;background:#a0a0a0;"></div>
<div style="left:47px;top:355px;width:1px;height:1px;background:#a0a0a0;"></div>
<div style="left:49px;top:355px;width:1px;height:1px;background:#a0a0a0;"></div>
<div style="left:51px;top:355px;width:1px;height:1px;background:#a0a0a0;"></div>
<svg style="position:absolute;left:53px;top:328px;" width="17" height="16" viewBox="0 0 17 16"><path d="M3.5 6.5 q5 11 10 0 z" fill="#f6c040" stroke="#b88a20" stroke-width="0.8"/><ellipse cx="8.5" cy="5.6" rx="7.8" ry="2.5" fill="#4a98e0" stroke="#2a6ab0" stroke-width="0.8"/><ellipse cx="8.5" cy="3.6" rx="4.2" ry="3.1" fill="#6ab4f4" stroke="#2a6ab0" stroke-width="0.8"/><path d="M12.5 9 l3.5 3.3 l-3.5 3.3 l-3.5 -3.3 z" fill="#8c8c8c" stroke="#606060" stroke-width="0.8"/></svg>
<div style="left:76.00px;top:330.34px;font-size:12px;line-height:12px;color:#000;font-weight:400;font-family:'Liberation Sans',sans-serif;letter-spacing:-0.023px;white-space:pre;">Batch cancellation</div>
<svg style="position:absolute;left:53px;top:346px;" width="17" height="16" viewBox="0 0 17 16"><path d="M3.5 6.5 q5 11 10 0 z" fill="#f6c040" stroke="#b88a20" stroke-width="0.8"/><ellipse cx="8.5" cy="5.6" rx="7.8" ry="2.5" fill="#4a98e0" stroke="#2a6ab0" stroke-width="0.8"/><ellipse cx="8.5" cy="3.6" rx="4.2" ry="3.1" fill="#6ab4f4" stroke="#2a6ab0" stroke-width="0.8"/><path d="M12.5 9 l3.5 3.3 l-3.5 3.3 l-3.5 -3.3 z" fill="#8c8c8c" stroke="#606060" stroke-width="0.8"/></svg>
<div style="left:74px;top:345px;width:132px;height:18px;background:#0078d7;"></div>
<div style="left:76.00px;top:348.34px;font-size:12px;line-height:12px;color:#ffffff;font-weight:400;font-family:'Liberation Sans',sans-serif;letter-spacing:-0.133px;white-space:pre;">Invincible EA Demo Free</div>
<svg style="position:absolute;left:16px;top:369px;" width="9" height="9" viewBox="0 0 9 9"><defs><linearGradient id="pb" x1="0" y1="0" x2="0" y2="1"><stop offset="0" stop-color="#ffffff"/><stop offset="1" stop-color="#d8d8e0"/></linearGradient></defs><rect x="0.5" y="0.5" width="8" height="8" rx="1.2" fill="url(#pb)" stroke="#9a8a9a"/><path d="M2 4.5 h5 M4.5 2 v5" stroke="#1a2a5a"/></svg>
<div style="left:26px;top:373px;width:1px;height:1px;background:#a0a0a0;"></div>
<div style="left:28px;top:373px;width:1px;height:1px;background:#a0a0a0;"></div>
<div style="left:30px;top:373px;width:1px;height:1px;background:#a0a0a0;"></div>
<svg style="position:absolute;left:32px;top:364px;" width="16" height="15" viewBox="0 0 16 15"><path d="M4 2.5 h8 v9.5 h-8 z" fill="#f8d880" stroke="#c09030" stroke-width="0.9"/><path d="M2.5 1 h10.5 q1 0 1 1.5 q0 1.5 -1 1.5 h-10.5 q-1 0 -1 -1.5 q0 -1.5 1 -1.5 z" fill="#f4c860" stroke="#c09030" stroke-width="0.9"/><path d="M2.5 11 h9 q1 0 1 1.5 q0 1.5 -1 1.5 h-9 q-1 0 -1 -1.5 q0 -1.5 1 -1.5 z" fill="#f4c860" stroke="#c09030" stroke-width="0.9"/><path d="M6 6 h1.5 M8.5 6 h1.5 M6 8 h1.5 M8.5 8 h1.5" stroke="#9a7030"/><path d="M12 9 l3.3 3 l-3.3 3 l-3.3 -3 z" fill="#f2b040" stroke="#b87a10" stroke-width="0.8"/></svg>
<div style="left:55.00px;top:366.34px;font-size:12px;line-height:12px;color:#000;font-weight:400;font-family:'Liberation Sans',sans-serif;letter-spacing:-0.170px;white-space:pre;">Scripts</div>
<div style="left:7px;top:383px;width:239px;height:19px;background:#f0f0f0;"></div>
<div style="left:7px;top:382px;width:239px;height:1px;background:#000;"></div>
<div style="left:9px;top:382px;width:71px;height:20px;background:#ffffff;box-sizing:border-box;border:1px solid #000;border-top:none;"></div>
<div style="left:80px;top:383px;width:1px;height:20px;background:#a0a0a0;"></div>
<div style="left:10px;top:402px;width:71px;height:1px;background:#a0a0a0;"></div>
<div style="left:19.00px;top:385.84px;font-size:12px;line-height:12px;color:#000;font-weight:400;font-family:'Liberation Sans',sans-serif;letter-spacing:0.385px;white-space:pre;">Common</div>
<div style="left:90.20px;top:385.84px;font-size:12px;line-height:12px;color:#6d6d6d;font-weight:400;font-family:'Liberation Sans',sans-serif;letter-spacing:-0.262px;white-space:pre;">Favorites</div>
<div style="left:147px;top:386px;width:1px;height:13px;background:#6d6d6d;"></div>
<div style="left:251px;top:109px;width:618px;height:1px;background:#696969;"></div>
<div style="left:251px;top:110px;width:618px;height:276px;background:#000;"></div>
<div style="left:869px;top:109px;width:2px;height:279px;background:#ffffff;"></div>
<div style="left:253px;top:112px;width:571px;height:254px;box-sizing:border-box;border:1px solid #fff;background:transparent;"></div>
<div style="left:254px;top:272px;width:569px;height:1px;background:#778899;"></div>
<div style="left:268.80px;top:115.96px;font-size:9.5px;line-height:9.5px;color:#fff;font-weight:400;font-family:'Liberation Sans',sans-serif;letter-spacing:0.018px;white-space:pre;">XAUUSD.s,Daily</div>
<div style="left:346.50px;top:115.96px;font-size:9.5px;line-height:9.5px;color:#fff;font-weight:400;font-family:'Liberation Sans',sans-serif;letter-spacing:-0.122px;white-space:pre;">1965.67 1965.93 1958.98 1962.05</div>
<svg style="position:absolute;left:257px;top:119px;" width="8" height="5" viewBox="0 0 8 5"><path d="M0 0 h8 l-4 4.5 z" fill="#fff"/></svg>
<div style="left:824px;top:131px;width:2px;height:1px;background:#fff;"></div>
<div style="left:829.00px;top:127.38px;font-size:9px;line-height:9px;color:#fff;font-weight:400;font-family:'Liberation Sans',sans-serif;letter-spacing:0.136px;white-space:pre;">2074.95</div>
<div style="left:824px;top:164px;width:2px;height:1px;background:#fff;"></div>
<div style="left:829.00px;top:160.38px;font-size:9px;line-height:9px;color:#fff;font-weight:400;font-family:'Liberation Sans',sans-serif;letter-spacing:0.136px;white-space:pre;">2048.70</div>
<div style="left:824px;top:197px;width:2px;height:1px;background:#fff;"></div>
<div style="left:829.00px;top:193.38px;font-size:9px;line-height:9px;color:#fff;font-weight:400;font-family:'Liberation Sans',sans-serif;letter-spacing:0.136px;white-space:pre;">2022.45</div>
<div style="left:824px;top:230px;width:2px;height:1px;background:#fff;"></div>
<div style="left:829.00px;top:226.38px;font-size:9px;line-height:9px;color:#fff;font-weight:400;font-family:'Liberation Sans',sans-serif;letter-spacing:0.136px;white-space:pre;">1995.45</div>
<div style="left:824px;top:263px;width:2px;height:1px;background:#fff;"></div>
<div style="left:829.00px;top:259.38px;font-size:9px;line-height:9px;color:#fff;font-weight:400;font-family:'Liberation Sans',sans-serif;letter-spacing:0.136px;white-space:pre;">1969.20</div>
<div style="left:824px;top:296px;width:2px;height:1px;background:#fff;"></div>
<div style="left:829.00px;top:292.38px;font-size:9px;line-height:9px;color:#fff;font-weight:400;font-family:'Liberation Sans',sans-serif;letter-spacing:0.136px;white-space:pre;">1942.95</div>
<div style="left:824px;top:329px;width:2px;height:1px;background:#fff;"></div>
<div style="left:829.00px;top:325.38px;font-size:9px;line-height:9px;color:#fff;font-weight:400;font-family:'Liberation Sans',sans-serif;letter-spacing:0.136px;white-space:pre;">1916.70</div>
<div style="left:824px;top:362px;width:2px;height:1px;background:#fff;"></div>
<div style="left:829.00px;top:358.38px;font-size:9px;line-height:9px;color:#fff;font-weight:400;font-family:'Liberation Sans',sans-serif;letter-spacing:0.136px;white-space:pre;">1890.45</div>
<div style="left:825px;top:267px;width:41px;height:11px;background:#fff;"></div>
<div style="left:829.00px;top:268.38px;font-size:9px;line-height:9px;color:#000;font-weight:400;font-family:'Liberation Sans',sans-serif;letter-spacing:0.136px;white-space:pre;">1962.05</div>
<div style="left:254px;top:366px;width:1px;height:3px;background:#fff;"></div>
<div style="left:253.50px;top:370.38px;font-size:9px;line-height:9px;color:#fff;font-weight:400;font-family:'Liberation Sans',sans-serif;letter-spacing:0.087px;white-space:pre;">26 Apr 2023</div>
<div style="left:318px;top:366px;width:1px;height:3px;background:#fff;"></div>
<div style="left:317.50px;top:370.38px;font-size:9px;line-height:9px;color:#fff;font-weight:400;font-family:'Liberation Sans',sans-serif;letter-spacing:0.247px;white-space:pre;">8 May 2023</div>
<div style="left:382px;top:366px;width:1px;height:3px;background:#fff;"></div>
<div style="left:381.50px;top:370.38px;font-size:9px;line-height:9px;color:#fff;font-weight:400;font-family:'Liberation Sans',sans-serif;letter-spacing:0.223px;white-space:pre;">18 May 2023</div>
<div style="left:446px;top:366px;width:1px;height:3px;background:#fff;"></div>
<div style="left:445.50px;top:370.38px;font-size:9px;line-height:9px;color:#fff;font-weight:400;font-family:'Liberation Sans',sans-serif;letter-spacing:0.223px;white-space:pre;">30 May 2023</div>
<div style="left:510px;top:366px;width:1px;height:3px;background:#fff;"></div>
<div style="left:509.50px;top:370.38px;font-size:9px;line-height:9px;color:#fff;font-weight:400;font-family:'Liberation Sans',sans-serif;letter-spacing:-0.005px;white-space:pre;">9 Jun 2023</div>
<div style="left:574px;top:366px;width:1px;height:3px;background:#fff;"></div>
<div style="left:573.50px;top:370.38px;font-size:9px;line-height:9px;color:#fff;font-weight:400;font-family:'Liberation Sans',sans-serif;letter-spacing:-0.004px;white-space:pre;">21 Jun 2023</div>
<div style="left:638px;top:366px;width:1px;height:3px;background:#fff;"></div>
<div style="left:637.50px;top:370.38px;font-size:9px;line-height:9px;color:#fff;font-weight:400;font-family:'Liberation Sans',sans-serif;letter-spacing:-0.005px;white-space:pre;">3 Jul 2023</div>
<div style="left:702px;top:366px;width:1px;height:3px;background:#fff;"></div>
<div style="left:701.50px;top:370.38px;font-size:9px;line-height:9px;color:#fff;font-weight:400;font-family:'Liberation Sans',sans-serif;letter-spacing:-0.004px;white-space:pre;">13 Jul 2023</div>
<div style="left:766px;top:366px;width:1px;height:3px;background:#fff;"></div>
<div style="left:765.50px;top:370.38px;font-size:9px;line-height:9px;color:#fff;font-weight:400;font-family:'Liberation Sans',sans-serif;letter-spacing:-0.004px;white-space:pre;">25 Jul 2023</div>
<svg style="position:absolute;left:251px;top:110px;" width="572" height="256" viewBox="0 0 572 256"><path d="M3.5 103V137M4 128.5H6M11.5 111V147M9 128.5H11M12 130.5H14M19.5 121V146M17 130.5H19M20 128.5H22M27.5 107V144M25 128.5H27M28 138.5H30M35.5 91V142M33 138.5H35M36 94.5H38M43.5 64V106M41 94.5H43M44 66.5H46M51.5 15V78M49 62.5H51M52 52.5H54M59.5 49V116M57 52.5H59M60 94.5H62M67.5 78V98M65 96.5H67M68 88.5H70M75.5 68V91M73 90.5H75M76 72.5H78M83.5 55V89M81 72.5H83M84 78.5H86M91.5 63V102M89 77.5H91M92 96.5H94M99.5 87V115M97 96.5H99M100 102.5H102M107.5 87V106M105 106.5H107M108 94.5H110M115.5 92V134M113 95.5H115M116 129.5H118M123.5 124V147M121 129.5H123M124 138.5H126M131.5 132V176M129 138.5H131M132 168.5H134M139.5 135V173M137 168.5H139M140 143.5H142M147.5 137V155M145 143.5H147M148 150.5H150M155.5 143V173M153 150.5H155M156 146.5H158M163.5 133V170M161 146.5H163M164 169.5H166M171.5 159V192M169 168.5H171M172 189.5H174M179.5 168V195M177 190.5H179M180 182.5H182M187.5 178V189M185 188.5H187M188 186.5H190M195.5 160V201M193 185.5H195M196 166.5H198M203.5 146V174M201 166.5H203M204 163.5H206M211.5 136V174M209 162.5H211M212 143.5H214M219.5 136V180M217 143.5H219M220 180.5H222M227.5 160V193M225 181.5H227M228 163.5H230M235.5 157V173M233 163.5H235M236 162.5H238M243.5 152V191M241 162.5H243M244 190.5H246M251.5 152V190M249 189.5H251M252 158.5H254M259.5 149V170M257 158.5H259M260 164.5H262M267.5 156V179M265 166.5H267M268 168.5H270M275.5 151V191M273 168.5H275M276 185.5H278M283.5 164V191M281 186.5H283M284 188.5H286M291.5 164V209M289 188.5H291M292 167.5H294M299.5 155V174M297 168.5H299M300 168.5H302M307.5 166V180M305 168.5H307M308 178.5H310M315.5 169V204M313 176.5H315M316 195.5H318M323.5 190V217M321 195.5H323M324 199.5H326M331.5 196V225M329 199.5H331M332 224.5H334M339.5 193V228M337 224.5H339M340 213.5H342M347.5 198V214M345 208.5H347M348 212.5H350M355.5 201V226M353 212.5H355M356 224.5H358M363.5 218V237M361 223.5H363M364 231.5H366M371.5 224V250M369 231.5H371M372 231.5H374M379.5 211V240M377 231.5H379M380 216.5H382M387.5 201V228M385 216.5H387M388 213.5H390M395.5 201V216M393 214.5H395M396 209.5H398M403.5 196V222M401 208.5H403M404 221.5H406M411.5 205V237M409 221.5H411M412 227.5H414M419.5 196V229M417 227.5H419M420 209.5H422M427.5 205V225M425 209.5H427M428 208.5H430M435.5 192V209M433 209.5H435M436 199.5H438M443.5 165V201M441 200.5H443M444 168.5H446M451.5 160V175M449 169.5H451M452 164.5H454M459.5 160V177M457 164.5H459M460 172.5H462M467.5 165V184M465 172.5H467M468 172.5H470M475.5 134V172M473 172.5H475M476 141.5H478M483.5 139V154M481 141.5H483M484 143.5H486M491.5 130V159M489 144.5H491M492 153.5H494M499.5 148V170M497 153.5H499M500 163.5H502M507.5 155V174M505 163.5H507M508 173.5H510M515.5 158V176M513 172.5H515M516 159.5H518M523.5 142V163M521 160.5H523M524 150.5H526M531.5 137V188M529 150.5H531M532 185.5H534M539.5 160V183M537 183.5H539M540 166.5H542M547.5 149V177M545 166.5H547M548 158.5H550M555.5 157V167M553 158.5H555M556 163.5H558" stroke="#00ff00" stroke-width="1" fill="none" shape-rendering="crispEdges"/></svg>
<div style="left:251px;top:386px;width:620px;height:2px;background:#ffffff;"></div>
<div style="left:251px;top:388px;width:620px;height:1px;background:#000;"></div>
<div style="left:251px;top:389px;width:618px;height:19px;background:#f0f0f0;"></div>
<div style="left:869px;top:389px;width:1px;height:19px;background:#e3e3e3;"></div>
<div style="left:371px;top:388px;width:104px;height:19px;background:#ffffff;box-sizing:border-box;border:1px solid #000;border-top:none;"></div>
<div style="left:475px;top:389px;width:1px;height:19px;background:#a0a0a0;"></div>
<div style="left:267.40px;top:391.84px;font-size:12px;line-height:12px;color:#6d6d6d;font-weight:400;font-family:'Liberation Sans',sans-serif;letter-spacing:-0.665px;white-space:pre;">EURUSD.s,Weekly</div>
<div style="left:382.00px;top:391.84px;font-size:12px;line-height:12px;color:#000;font-weight:400;font-family:'Liberation Sans',sans-serif;letter-spacing:-0.490px;white-space:pre;">XAUUSD.s,Daily</div>
<svg style="position:absolute;left:838px;top:394px;" width="5" height="7" viewBox="0 0 5 7"><path d="M4 0 L0.5 3.5 L4 7 z" fill="#a0a0a0"/></svg>
<svg style="position:absolute;left:858px;top:394px;" width="5" height="7" viewBox="0 0 5 7"><path d="M0.5 0 L4 3.5 L0.5 7 z" fill="#a0a0a0"/></svg>
<div style="left:3px;top:408px;width:868px;height:1px;background:#ffffff;"></div>
<div style="left:3px;top:409px;width:868px;height:267px;background:#f0f0f0;"></div>
<div style="left:4px;top:426px;width:13px;height:251px;background:linear-gradient(180deg,#d6e3ef 0 50px,#d2dfec 50px 100px,#cfdce9 100px 150px,#cbd8e6 150px 200px,#c8d5e3 200px);"></div>
<svg style="position:absolute;left:6px;top:414px;" width="8" height="7" viewBox="0 0 8 7"><path d="M1.3 0.8 L6.7 6.2 M6.7 0.8 L1.3 6.2" stroke="#000" stroke-width="1.7"/></svg>
<div style="left:5.3px;top:673.5px;font-size:12px;line-height:12px;white-space:pre;letter-spacing:-0.3px;transform:rotate(-90deg);transform-origin:0 0;color:#000">Terminal</div>
<div style="left:18px;top:412px;width:850px;height:1px;background:#a0a0a0;"></div>
<div style="left:18px;top:412px;width:1px;height:264px;background:#a0a0a0;"></div>
<div style="left:19px;top:413px;width:848px;height:241px;background:#ffffff;"></div>
<div style="left:867px;top:413px;width:1px;height:263px;background:#f4f4f4;"></div>
<div style="left:25px;top:413px;width:1px;height:24px;background:#e3e3e3;"></div>
<div style="left:142px;top:413px;width:1px;height:24px;background:#e3e3e3;"></div>
<div style="left:200px;top:413px;width:1px;height:24px;background:#e3e3e3;"></div>
<div style="left:236px;top:413px;width:1px;height:24px;background:#e3e3e3;"></div>
<div style="left:290px;top:413px;width:1px;height:24px;background:#e3e3e3;"></div>
<div style="left:348px;top:413px;width:1px;height:24px;background:#e3e3e3;"></div>
<div style="left:402px;top:413px;width:1px;height:24px;background:#e3e3e3;"></div>
<div style="left:455px;top:413px;width:1px;height:24px;background:#e3e3e3;"></div>
<div style="left:508px;top:413px;width:1px;height:24px;background:#e3e3e3;"></div>
<div style="left:580px;top:413px;width:1px;height:24px;background:#e3e3e3;"></div>
<div style="left:691px;top:413px;width:1px;height:24px;background:#e3e3e3;"></div>
<div style="left:111.27px;top:418.84px;font-size:12px;line-height:12px;color:#000;font-weight:400;font-family:'Liberation Sans',sans-serif;letter-spacing:0.000px;white-space:pre;">Time</div>
<div style="left:168.98px;top:418.84px;font-size:12px;line-height:12px;color:#000;font-weight:400;font-family:'Liberation Sans',sans-serif;letter-spacing:0.000px;white-space:pre;">Type</div>
<div style="left:208.16px;top:418.84px;font-size:12px;line-height:12px;color:#000;font-weight:400;font-family:'Liberation Sans',sans-serif;letter-spacing:0.000px;white-space:pre;">Size</div>
<div style="left:245.48px;top:418.84px;font-size:12px;line-height:12px;color:#000;font-weight:400;font-family:'Liberation Sans',sans-serif;letter-spacing:0.000px;white-space:pre;">Symbol</div>
<div style="left:371.88px;top:418.84px;font-size:12px;line-height:12px;color:#000;font-weight:400;font-family:'Liberation Sans',sans-serif;letter-spacing:0.000px;white-space:pre;">T / P</div>
<div style="left:423.16px;top:418.84px;font-size:12px;line-height:12px;color:#000;font-weight:400;font-family:'Liberation Sans',sans-serif;letter-spacing:0.000px;white-space:pre;">Price</div>
<div style="left:472.97px;top:418.84px;font-size:12px;line-height:12px;color:#000;font-weight:400;font-family:'Liberation Sans',sans-serif;letter-spacing:0.000px;white-space:pre;">Swap</div>
<div style="left:547.98px;top:418.84px;font-size:12px;line-height:12px;color:#000;font-weight:400;font-family:'Liberation Sans',sans-serif;letter-spacing:0.000px;white-space:pre;">Profit</div>
<div style="left:634.98px;top:418.84px;font-size:12px;line-height:12px;color:#000;font-weight:400;font-family:'Liberation Sans',sans-serif;letter-spacing:0.000px;white-space:pre;">Comment</div>
<div style="left:297.40px;top:418.84px;font-size:12px;line-height:12px;color:#000;font-weight:400;font-family:'Liberation Sans',sans-serif;letter-spacing:-0.169px;white-space:pre;">Price</div>
<svg style="position:absolute;left:334px;top:421px;" width="9" height="9" viewBox="0 0 9 9"><path d="M1 1.5 H7.8 M1 1.5 L4.8 7.8" fill="none" stroke="#6a7888" stroke-width="1.1"/></svg>
<div style="left:19px;top:437px;width:673px;height:20px;background:#c8c8c8;"></div>
<svg style="position:absolute;left:25px;top:443px;" width="9" height="9" viewBox="0 0 9 9"><circle cx="4.6" cy="4.4" r="3.3" fill="#d4d4d4" stroke="#8a7f98" stroke-width="1"/><path d="M2.6 5.2 q0 -2.6 2.6 -2.8" stroke="#ffffff" stroke-width="1.2" fill="none"/></svg>
<div style="left:41.30px;top:440.84px;font-size:12px;line-height:12px;color:#000;font-weight:700;font-family:'Liberation Sans',sans-serif;letter-spacing:-0.116px;white-space:pre;">Balance: 50 000.00 USD  Equity: 50 000.00  Free margin: 50 000.00</div>
<div style="left:553.64px;top:440.84px;font-size:12px;line-height:12px;color:#000;font-weight:700;font-family:'Liberation Sans',sans-serif;letter-spacing:0.000px;white-space:pre;">0.00</div>
<div style="left:19px;top:654px;width:848px;height:1px;background:#000;"></div>
<div style="left:19px;top:655px;width:848px;height:21px;background:#f0f0f0;"></div>
<div style="left:21px;top:654px;width:49px;height:20px;background:#ffffff;box-sizing:border-box;border:1px solid #000;border-top:none;"></div>
<div style="left:70px;top:655px;width:1px;height:20px;background:#a0a0a0;"></div>
<div style="left:22px;top:674px;width:49px;height:1px;background:#a0a0a0;"></div>
<div style="left:32.20px;top:657.84px;font-size:12px;line-height:12px;color:#000;font-weight:400;font-family:'Liberation Sans',sans-serif;letter-spacing:-0.781px;white-space:pre;">Trade</div>
<div style="left:80.10px;top:657.84px;font-size:12px;line-height:12px;color:#6d6d6d;font-weight:400;font-family:'Liberation Sans',sans-serif;letter-spacing:-0.338px;white-space:pre;">Exposure</div>
<div style="left:148.40px;top:657.84px;font-size:12px;line-height:12px;color:#6d6d6d;font-weight:400;font-family:'Liberation Sans',sans-serif;letter-spacing:0.098px;white-space:pre;">Account History</div>
<div style="left:254.30px;top:657.84px;font-size:12px;line-height:12px;color:#6d6d6d;font-weight:400;font-family:'Liberation Sans',sans-serif;letter-spacing:-0.379px;white-space:pre;">News</div>
<div style="left:303.00px;top:657.84px;font-size:12px;line-height:12px;color:#6d6d6d;font-weight:400;font-family:'Liberation Sans',sans-serif;letter-spacing:-0.115px;white-space:pre;">Alerts</div>
<div style="left:353.00px;top:657.84px;font-size:12px;line-height:12px;color:#6d6d6d;font-weight:400;font-family:'Liberation Sans',sans-serif;letter-spacing:0.234px;white-space:pre;">Mailbox</div>
<div style="left:423.00px;top:657.84px;font-size:12px;line-height:12px;color:#6d6d6d;font-weight:400;font-family:'Liberation Sans',sans-serif;letter-spacing:0.052px;white-space:pre;">Market</div>
<div style="left:480.00px;top:657.84px;font-size:12px;line-height:12px;color:#6d6d6d;font-weight:400;font-family:'Liberation Sans',sans-serif;letter-spacing:-0.266px;white-space:pre;">Signals</div>
<div style="left:537.30px;top:657.84px;font-size:12px;line-height:12px;color:#6d6d6d;font-weight:400;font-family:'Liberation Sans',sans-serif;letter-spacing:-0.043px;white-space:pre;">Articles</div>
<div style="left:596.40px;top:657.84px;font-size:12px;line-height:12px;color:#6d6d6d;font-weight:400;font-family:'Liberation Sans',sans-serif;letter-spacing:-0.486px;white-space:pre;">Code Base</div>
<div style="left:671.40px;top:657.84px;font-size:12px;line-height:12px;color:#6d6d6d;font-weight:400;font-family:'Liberation Sans',sans-serif;letter-spacing:-0.384px;white-space:pre;">Experts</div>
<div style="left:729.00px;top:657.84px;font-size:12px;line-height:12px;color:#6d6d6d;font-weight:400;font-family:'Liberation Sans',sans-serif;letter-spacing:-0.194px;white-space:pre;">Journal</div>
<div style="left:398.00px;top:663.38px;font-size:9px;line-height:9px;color:#e00000;font-weight:700;font-family:'Liberation Sans',sans-serif;letter-spacing:0.000px;white-space:pre;">8</div>
<div style="left:138px;top:659px;width:1px;height:13px;background:#6d6d6d;"></div>
<div style="left:244px;top:659px;width:1px;height:13px;background:#6d6d6d;"></div>
<div style="left:293px;top:659px;width:1px;height:13px;background:#6d6d6d;"></div>
<div style="left:343px;top:659px;width:1px;height:13px;background:#6d6d6d;"></div>
<div style="left:413px;top:659px;width:1px;height:13px;background:#6d6d6d;"></div>
<div style="left:470px;top:659px;width:1px;height:13px;background:#6d6d6d;"></div>
<div style="left:527px;top:659px;width:1px;height:13px;background:#6d6d6d;"></div>
<div style="left:587px;top:659px;width:1px;height:13px;background:#6d6d6d;"></div>
<div style="left:662px;top:659px;width:1px;height:13px;background:#6d6d6d;"></div>
<div style="left:720px;top:659px;width:1px;height:13px;background:#6d6d6d;"></div>
<div style="left:777px;top:659px;width:1px;height:13px;background:#6d6d6d;"></div>
<div style="left:3px;top:676px;width:868px;height:1px;background:#ffffff;"></div>
<div style="left:3px;top:677px;width:868px;height:2px;background:#f0f0f0;"></div>
<div style="left:3px;top:679px;width:868px;height:1px;background:#a0a0a0;"></div>
<div style="left:3px;top:680px;width:868px;height:1px;background:#ffffff;"></div>
<div style="left:3px;top:681px;width:868px;height:21px;background:#f0f0f0;"></div>
<div style="left:3px;top:702px;width:868px;height:1px;background:#fafafa;"></div>
<div style="left:5.70px;top:686.84px;font-size:12px;line-height:12px;color:#000;font-weight:400;font-family:'Liberation Sans',sans-serif;letter-spacing:-0.438px;white-space:pre;">For Help, press F1</div>
<div style="left:164.60px;top:686.84px;font-size:12px;line-height:12px;color:#000;font-weight:400;font-family:'Liberation Sans',sans-serif;letter-spacing:0.000px;white-space:pre;">Default</div>
<div style="left:158px;top:684px;width:1px;height:18px;background:#a0a0a0;"></div>
<div style="left:159px;top:684px;width:1px;height:18px;background:#ffffff;"></div>
<div style="left:275px;top:684px;width:1px;height:18px;background:#a0a0a0;"></div>
<div style="left:276px;top:684px;width:1px;height:18px;background:#ffffff;"></div>
<div style="left:377px;top:684px;width:1px;height:18px;background:#a0a0a0;"></div>
<div style="left:378px;top:684px;width:1px;height:18px;background:#ffffff;"></div>
<div style="left:447px;top:684px;width:1px;height:18px;background:#a0a0a0;"></div>
<div style="left:448px;top:684px;width:1px;height:18px;background:#ffffff;"></div>
<div style="left:519px;top:684px;width:1px;height:18px;background:#a0a0a0;"></div>
<div style="left:520px;top:684px;width:1px;height:18px;background:#ffffff;"></div>
<div style="left:587px;top:684px;width:1px;height:18px;background:#a0a0a0;"></div>
<div style="left:588px;top:684px;width:1px;height:18px;background:#ffffff;"></div>
<div style="left:656px;top:684px;width:1px;height:18px;background:#a0a0a0;"></div>
<div style="left:657px;top:684px;width:1px;height:18px;background:#ffffff;"></div>
<div style="left:722px;top:684px;width:1px;height:18px;background:#a0a0a0;"></div>
<div style="left:723px;top:684px;width:1px;height:18px;background:#ffffff;"></div>
<svg style="position:absolute;left:728px;top:686px;" width="24" height="13" viewBox="0 0 24 13"><rect x="0.0" y="0" width="1.4" height="13" fill="#1a8a1a"/><rect x="0.0" y="10.0" width="1.4" height="3.0" fill="#1a3a9a"/><rect x="2.3" y="0" width="1.4" height="13" fill="#1a8a1a"/><rect x="2.3" y="9.2" width="1.4" height="3.8" fill="#1a3a9a"/><rect x="4.6" y="0" width="1.4" height="13" fill="#1a8a1a"/><rect x="4.6" y="8.5" width="1.4" height="4.5" fill="#1a3a9a"/><rect x="6.9" y="0" width="1.4" height="13" fill="#1a8a1a"/><rect x="6.9" y="7.8" width="1.4" height="5.2" fill="#1a3a9a"/><rect x="9.2" y="0" width="1.4" height="13" fill="#1a8a1a"/><rect x="9.2" y="7.0" width="1.4" height="6.0" fill="#1a3a9a"/><rect x="11.5" y="0" width="1.4" height="13" fill="#1a8a1a"/><rect x="11.5" y="6.2" width="1.4" height="6.8" fill="#1a3a9a"/><rect x="13.8" y="0" width="1.4" height="13" fill="#1a8a1a"/><rect x="13.8" y="5.5" width="1.4" height="7.5" fill="#1a3a9a"/><rect x="16.1" y="0" width="1.4" height="13" fill="#1a8a1a"/><rect x="16.1" y="4.8" width="1.4" height="8.2" fill="#1a3a9a"/><rect x="18.4" y="0" width="1.4" height="13" fill="#1a8a1a"/><rect x="18.4" y="4.0" width="1.4" height="9.0" fill="#1a3a9a"/><rect x="20.7" y="0" width="1.4" height="13" fill="#1a8a1a"/><rect x="20.7" y="3.2" width="1.4" height="9.8" fill="#1a3a9a"/></svg>
<div style="left:755.70px;top:686.84px;font-size:12px;line-height:12px;color:#000;font-weight:400;font-family:'Liberation Sans',sans-serif;letter-spacing:-0.239px;white-space:pre;">5779/29 kb</div>
<svg style="position:absolute;left:850px;top:685px;" width="17" height="17" viewBox="0 0 17 17"><path d="M16 4 L4 16 M16 8 L8 16 M16 12 L12 16" stroke="#a0a0a0" stroke-width="1.2"/></svg>
<div style="left:494px;top:703px;width:61px;height:3px;background:#8a98a4;"></div>
<div style="left:555px;top:703px;width:50px;height:3px;background:#4d6d85;"></div>
<div style="left:605px;top:703px;width:85px;height:3px;background:#5a7a88;"></div>
<div style="left:690px;top:703px;width:60px;height:3px;background:#8aa0a4;"></div>
<div style="left:750px;top:703px;width:50px;height:3px;background:#3f6a80;"></div>
<div style="left:800px;top:703px;width:71px;height:3px;background:#98a8b0;"></div>
<div style="left:3px;top:409px;width:1px;height:268px;background:#ffffff;"></div>
<div style="left:3px;top:681px;width:1px;height:22px;background:#ffffff;"></div>
</body></html>
